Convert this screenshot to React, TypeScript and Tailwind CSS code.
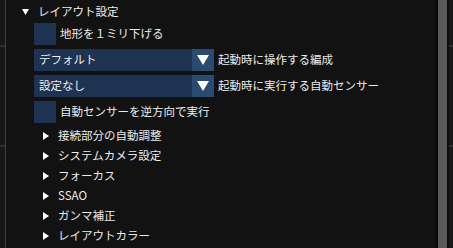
import React from 'react'

const font = { fontFamily: '"Noto Sans CJK JP", "Noto Sans", sans-serif' }

const DownTri: React.FC<{ className?: string }> = ({ className }) => (
  <svg viewBox="0 0 12 10" className={className}>
    <polygon points="0,0 12,0 6,10" fill="#ffffff" />
  </svg>
)

const RightTri: React.FC = () => (
  <svg viewBox="0 0 6 8" className="w-[6px] h-[8px]">
    <polygon points="0,0 6,4 0,8" fill="#ffffff" />
  </svg>
)

const Checkbox: React.FC<{ label: string }> = ({ label }) => (
  <div className="flex items-center h-[22px] pl-[28px] gap-[4px]">
    <div className="w-[22px] h-[22px] bg-[#1e3252]" />
    <span className="text-[11.5px] text-[#ececec]">{label}</span>
  </div>
)

const Dropdown: React.FC<{ value: string; label: string }> = ({ value, label }) => (
  <div className="flex items-center h-[22px] pl-[28px] gap-[4px]">
    <div className="flex w-[180px] h-[22px] bg-[#1e3252]">
      <div className="flex-1 flex items-center pl-[5px] text-[11.5px] text-[#f0f0f0]">{value}</div>
      <div className="w-[22px] h-[22px] bg-[#2a4a70] flex items-center justify-center">
        <DownTri className="w-[12px] h-[10px]" />
      </div>
    </div>
    <span className="text-[11.5px] text-[#ececec]">{label}</span>
  </div>
)

const sections = ['接続部分の自動調整', 'システムカメラ設定', 'フォーカス', 'SSAO', 'ガンマ補正', 'レイアウトカラー']

export default function App() {
  return (
    <div className="w-[453px] h-[248px] flex bg-[#121212] overflow-hidden" style={font}>
      {/* left neighbour panel */}
      <div className="w-[5px] flex flex-col bg-[#171717]">
        <div className="h-[45px]" />
        <div className="h-[2px] bg-[#2e2e2e]" />
        <div className="h-[98px]" />
        <div className="h-[2px] bg-[#2e2e2e]" />
      </div>
      <div className="w-[1px] bg-[#3e3e3e]" />

      {/* main */}
      <div className="flex-1 flex flex-col pt-[1px]">
        <div className="flex items-center h-[22px] pl-[16px] gap-[9px]">
          <svg viewBox="0 0 7 6" className="w-[7px] h-[6px]">
            <polygon points="0,0 7,0 3.5,6" fill="#ffffff" />
          </svg>
          <span className="text-[11.5px] text-[#ececec]">レイアウト設定</span>
        </div>
        <div className="flex flex-col gap-[4px]">
          <Checkbox label="地形を１ミリ下げる" />
          <Dropdown value="デフォルト" label="起動時に操作する編成" />
          <Dropdown value="設定なし" label="起動時に実行する自動センサー" />
          <Checkbox label="自動センサーを逆方向で実行" />
        </div>
        <div className="flex flex-col pt-[3px]">
          {sections.map((s) => (
            <div key={s} className="flex items-center h-[20px] pl-[37px] gap-[9px]">
              <RightTri />
              <span className="text-[11.5px] text-[#ececec]">{s}</span>
            </div>
          ))}
        </div>
      </div>

      {/* scrollbar */}
      <div className="w-[2px] bg-[#080808]" />
      <div className="w-[9px] bg-[#5a5a5a]" />
      <div className="w-[2px] bg-[#0c0c0c]" />
      <div className="w-[4px] flex flex-col bg-[#1a1a1a]">
        <div className="h-[45px]" />
        <div className="h-[2px] bg-[#2e2e2e]" />
        <div className="h-[98px]" />
        <div className="h-[2px] bg-[#2e2e2e]" />
      </div>
    </div>
  )
}
